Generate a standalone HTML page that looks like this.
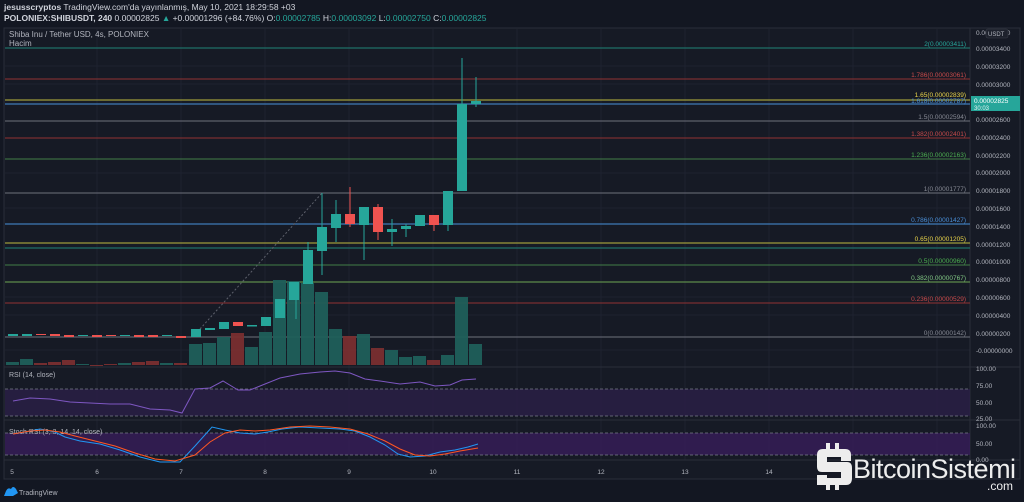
<!DOCTYPE html>
<html><head><meta charset="utf-8"><style>
body{margin:0;background:#131722;width:1024px;height:502px;overflow:hidden;font-family:"Liberation Sans",sans-serif;}
svg{position:absolute;left:0;top:0}
</style></head><body>
<svg width="1024" height="502" viewBox="0 0 1024 502" font-family="Liberation Sans, sans-serif">
<rect width="1024" height="502" fill="#131722"/>
<text x="4" y="10" font-size="8.5" fill="#d1d4dc"><tspan font-weight="bold">jesusscryptos</tspan> TradingView.com'da yayınlanmış, May 10, 2021 18:29:58 +03</text>
<text x="4" y="21" font-size="8.5" fill="#d1d4dc"><tspan font-weight="bold">POLONIEX:SHIBUSDT, 240</tspan> 0.00002825 <tspan fill="#26a69a">▲</tspan> +0.00001296 (+84.76%) O:<tspan fill="#26a69a">0.00002785</tspan> H:<tspan fill="#26a69a">0.00003092</tspan> L:<tspan fill="#26a69a">0.00002750</tspan> C:<tspan fill="#26a69a">0.00002825</tspan></text>
<rect x="4" y="28" width="1016" height="451" fill="#161a25" stroke="#2a2e39" stroke-width="1"/>
<g stroke="#1e2230" stroke-width="1">
<line x1="97" y1="29" x2="97" y2="460"/><line x1="181" y1="29" x2="181" y2="460"/><line x1="265" y1="29" x2="265" y2="460"/><line x1="349" y1="29" x2="349" y2="460"/><line x1="433" y1="29" x2="433" y2="460"/><line x1="517" y1="29" x2="517" y2="460"/><line x1="601" y1="29" x2="601" y2="460"/><line x1="685" y1="29" x2="685" y2="460"/><line x1="769" y1="29" x2="769" y2="460"/><line x1="853" y1="29" x2="853" y2="460"/><line x1="937" y1="29" x2="937" y2="460"/>
<line x1="5" y1="66" x2="970" y2="66"/><line x1="5" y1="84" x2="970" y2="84"/><line x1="5" y1="173" x2="970" y2="173"/><line x1="5" y1="208" x2="970" y2="208"/><line x1="5" y1="297" x2="970" y2="297"/><line x1="5" y1="315" x2="970" y2="315"/><line x1="5" y1="350" x2="970" y2="350"/>
</g>
<line x1="970" y1="28" x2="970" y2="460" stroke="#2a2e39"/>
<line x1="4" y1="367" x2="1020" y2="367" stroke="#2a2e39"/>
<line x1="4" y1="420" x2="1020" y2="420" stroke="#2a2e39"/>
<line x1="4" y1="460" x2="1020" y2="460" stroke="#2a2e39"/>
<text x="9" y="37" font-size="8" fill="#b2b5be">Shiba Inu / Tether USD, 4s, POLONIEX</text>
<text x="9" y="46" font-size="8" fill="#b2b5be">Hacim</text>
<!-- fib lines -->
<g stroke-width="1.2">
<line x1="5" y1="48" x2="970" y2="48" stroke="#1f6f68"/>
<line x1="5" y1="79" x2="970" y2="79" stroke="#7a2f30"/>
<line x1="5" y1="100" x2="970" y2="100" stroke="#9c9a3a"/>
<line x1="5" y1="104" x2="970" y2="104" stroke="#3f7ab8"/>
<line x1="5" y1="121" x2="970" y2="121" stroke="#5d606b"/>
<line x1="5" y1="138" x2="970" y2="138" stroke="#7a2f30"/>
<line x1="5" y1="159" x2="970" y2="159" stroke="#3a6b42"/>
<line x1="5" y1="193" x2="970" y2="193" stroke="#5d606b"/>
<line x1="5" y1="224" x2="970" y2="224" stroke="#3f7ab8"/>
<line x1="5" y1="243" x2="970" y2="243" stroke="#9c9a3a"/>
<line x1="5" y1="248" x2="970" y2="248" stroke="#1f6f68"/>
<line x1="5" y1="265" x2="970" y2="265" stroke="#3a6b42"/>
<line x1="5" y1="282" x2="970" y2="282" stroke="#5c8a4a"/>
<line x1="5" y1="303" x2="970" y2="303" stroke="#7a2f30"/>
<line x1="5" y1="337" x2="970" y2="337" stroke="#5d606b"/>
</g>
<g font-size="6.5" text-anchor="end">
<text x="966" y="46" fill="#26a69a">2(0.00003411)</text>
<text x="966" y="77" fill="#c94a4a">1.786(0.00003061)</text>
<text x="966" y="97" fill="#e8d34a">1.65(0.00002839)</text>
<text x="966" y="103" fill="#4a8fd8">1.618(0.00002787)</text>
<text x="966" y="119" fill="#868993">1.5(0.00002594)</text>
<text x="966" y="136" fill="#c94a4a">1.382(0.00002401)</text>
<text x="966" y="157" fill="#4caf50">1.236(0.00002163)</text>
<text x="966" y="191" fill="#868993">1(0.00001777)</text>
<text x="966" y="222" fill="#4a8fd8">0.786(0.00001427)</text>
<text x="966" y="241" fill="#e8d34a">0.65(0.00001205)</text>
<text x="966" y="263" fill="#4caf50">0.5(0.00000960)</text>
<text x="966" y="280" fill="#81c784">0.382(0.00000767)</text>
<text x="966" y="301" fill="#c94a4a">0.236(0.00000529)</text>
<text x="966" y="335" fill="#868993">0(0.00000142)</text>
</g>
<line x1="200" y1="329" x2="322" y2="193" stroke="#5d606b" stroke-dasharray="2,2"/>
<!-- early volume -->
<g opacity="0.95">
<rect x="6" y="362" width="13" height="3" fill="#1f5f5a"/><rect x="20" y="359" width="13" height="6" fill="#1f5f5a"/><rect x="34" y="363" width="13" height="2" fill="#7a2f30"/><rect x="48" y="362" width="13" height="3" fill="#7a2f30"/><rect x="62" y="360" width="13" height="5" fill="#7a2f30"/><rect x="76" y="364" width="13" height="1" fill="#1f5f5a"/><rect x="90" y="365" width="13" height="1" fill="#7a2f30"/><rect x="104" y="364" width="13" height="1" fill="#7a2f30"/><rect x="118" y="363" width="13" height="2" fill="#1f5f5a"/><rect x="132" y="362" width="13" height="3" fill="#7a2f30"/><rect x="146" y="361" width="13" height="4" fill="#7a2f30"/><rect x="160" y="363" width="13" height="2" fill="#1f5f5a"/><rect x="174" y="363" width="13" height="2" fill="#7a2f30"/>
<rect x="189" y="344" width="13" height="21" fill="#1f5f5a"/><rect x="203" y="343" width="13" height="22" fill="#1f5f5a"/><rect x="217" y="337" width="13" height="28" fill="#1f5f5a"/><rect x="231" y="333" width="13" height="32" fill="#7a2f30"/><rect x="245" y="347" width="13" height="18" fill="#1f5f5a"/><rect x="259" y="332" width="13" height="33" fill="#1f5f5a"/><rect x="273" y="280" width="13" height="85" fill="#1f5f5a"/><rect x="287" y="281" width="13" height="84" fill="#1f5f5a"/><rect x="301" y="283" width="13" height="82" fill="#1f5f5a"/><rect x="315" y="292" width="13" height="73" fill="#1f5f5a"/><rect x="329" y="329" width="13" height="36" fill="#1f5f5a"/><rect x="343" y="336" width="13" height="29" fill="#7a2f30"/><rect x="357" y="334" width="13" height="31" fill="#1f5f5a"/><rect x="371" y="348" width="13" height="17" fill="#7a2f30"/><rect x="385" y="350" width="13" height="15" fill="#1f5f5a"/><rect x="399" y="357" width="13" height="8" fill="#1f5f5a"/><rect x="413" y="356" width="13" height="9" fill="#1f5f5a"/><rect x="427" y="360" width="13" height="5" fill="#7a2f30"/><rect x="441" y="355" width="13" height="10" fill="#1f5f5a"/><rect x="455" y="297" width="13" height="68" fill="#1f5f5a"/><rect x="469" y="344" width="13" height="21" fill="#1f5f5a"/>
</g>
<!-- candles -->
<g>
<rect x="8" y="334" width="10" height="2" fill="#26a69a"/><rect x="22" y="334" width="10" height="2" fill="#26a69a"/><rect x="36" y="334" width="10" height="1" fill="#ef5350"/><rect x="50" y="334" width="10" height="2" fill="#ef5350"/><rect x="64" y="335" width="10" height="2" fill="#ef5350"/><rect x="78" y="335" width="10" height="1" fill="#26a69a"/><rect x="92" y="335" width="10" height="2" fill="#ef5350"/><rect x="106" y="335" width="10" height="1" fill="#ef5350"/><rect x="120" y="335" width="10" height="1" fill="#26a69a"/><rect x="134" y="335" width="10" height="2" fill="#ef5350"/><rect x="148" y="335" width="10" height="2" fill="#ef5350"/><rect x="162" y="335" width="10" height="1" fill="#26a69a"/><rect x="176" y="336" width="10" height="2" fill="#ef5350"/>
<g stroke="#26a69a" stroke-width="1"><line x1="296" y1="288" x2="296" y2="319"/><line x1="308" y1="242" x2="308" y2="284"/><line x1="322" y1="193" x2="322" y2="275"/><line x1="336" y1="200" x2="336" y2="242"/><line x1="364" y1="207" x2="364" y2="260"/><line x1="392" y1="219" x2="392" y2="246"/><line x1="406" y1="224" x2="406" y2="237"/><line x1="448" y1="191" x2="448" y2="231"/><line x1="462" y1="58" x2="462" y2="104"/><line x1="476" y1="77" x2="476" y2="107"/></g>
<g stroke="#ef5350"><line x1="350" y1="187" x2="350" y2="227"/><line x1="378" y1="204" x2="378" y2="240"/><line x1="434" y1="215" x2="434" y2="231"/></g>
<rect x="191" y="329" width="10" height="8" fill="#26a69a"/><rect x="205" y="328" width="10" height="2" fill="#26a69a"/><rect x="219" y="322" width="10" height="7" fill="#26a69a"/><rect x="233" y="322" width="10" height="4" fill="#ef5350"/><rect x="247" y="325" width="10" height="1.5" fill="#26a69a"/><rect x="261" y="317" width="10" height="9" fill="#26a69a"/><rect x="275" y="299" width="10" height="19" fill="#26a69a"/><rect x="289" y="282" width="10" height="18" fill="#26a69a"/><rect x="303" y="250" width="10" height="34" fill="#26a69a"/><rect x="317" y="227" width="10" height="24" fill="#26a69a"/><rect x="331" y="214" width="10" height="14" fill="#26a69a"/><rect x="345" y="214" width="10" height="10" fill="#ef5350"/><rect x="359" y="207" width="10" height="18" fill="#26a69a"/><rect x="373" y="207" width="10" height="25" fill="#ef5350"/><rect x="387" y="229" width="10" height="3" fill="#26a69a"/><rect x="401" y="226" width="10" height="3" fill="#26a69a"/><rect x="415" y="215" width="10" height="11" fill="#26a69a"/><rect x="429" y="215" width="10" height="10" fill="#ef5350"/><rect x="443" y="191" width="10" height="34" fill="#26a69a"/><rect x="457" y="104" width="10" height="87" fill="#26a69a"/><rect x="471" y="101" width="10" height="3" fill="#26a69a"/>
</g>
<!-- price axis -->
<g font-size="6.5" fill="#b2b5be">
<text x="976" y="35">0.00003400</text><text x="976" y="51">0.00003400</text><text x="976" y="69">0.00003200</text><text x="976" y="87">0.00003000</text><text x="976" y="122">0.00002600</text><text x="976" y="140">0.00002400</text><text x="976" y="158">0.00002200</text><text x="976" y="175">0.00002000</text><text x="976" y="193">0.00001800</text><text x="976" y="211">0.00001600</text><text x="976" y="229">0.00001400</text><text x="976" y="247">0.00001200</text><text x="976" y="264">0.00001000</text><text x="976" y="282">0.00000800</text><text x="976" y="300">0.00000600</text><text x="976" y="318">0.00000400</text><text x="976" y="336">0.00000200</text><text x="976" y="353">-0.00000000</text>
</g>
<rect x="986" y="29" width="22" height="9" rx="2" fill="#1e222d" stroke="#3a3e49" stroke-width="0.6"/><text x="988" y="36" font-size="6" fill="#b2b5be">USDT</text>
<rect x="971" y="96" width="49" height="15" fill="#26a69a"/>
<text x="974" y="103" font-size="6.5" fill="#fff">0.00002825</text><text x="974" y="110" font-size="6" fill="#e0f2f1">30:03</text>
<!-- RSI -->
<text x="9" y="377" font-size="7" fill="#b2b5be">RSI (14, close)</text>
<rect x="5" y="389" width="965" height="27" fill="#2a1f47" opacity="0.8"/>
<line x1="5" y1="389" x2="970" y2="389" stroke="#787b86" stroke-dasharray="3,2" stroke-width="0.8"/>
<line x1="5" y1="416" x2="970" y2="416" stroke="#787b86" stroke-dasharray="3,2" stroke-width="0.8"/>
<polyline fill="none" stroke="#7e57c2" stroke-width="1" points="13,401 30,398 50,399 70,402 90,403 110,404 130,404 150,409 170,410 182,413 195,389 210,388 223,381 238,390 250,390 265,384 280,378 300,374 320,372 335,371 350,373 365,379 380,381 400,384 420,382 435,386 450,385 462,380 476,379"/>
<g font-size="6.5" fill="#b2b5be"><text x="976" y="371">100.00</text><text x="976" y="388">75.00</text><text x="976" y="405">50.00</text><text x="976" y="421">25.00</text><text x="976" y="428">100.00</text><text x="976" y="446">50.00</text><text x="976" y="462">0.00</text></g>
<!-- Stoch -->
<rect x="5" y="433" width="965" height="22" fill="#3a1e5e" opacity="0.75"/>
<line x1="5" y1="433" x2="970" y2="433" stroke="#787b86" stroke-dasharray="3,2" stroke-width="0.8"/>
<line x1="5" y1="455" x2="970" y2="455" stroke="#787b86" stroke-dasharray="3,2" stroke-width="0.8"/>
<text x="9" y="434" font-size="7" fill="#b2b5be">Stoch RSI (3, 3, 14, 14, close)</text>
<polyline fill="none" stroke="#2196f3" stroke-width="1" points="13,434 25,432 40,429 55,432 65,437 80,441 100,444 120,450 140,457 160,462 180,462 195,446 212,427 225,430 240,433 255,434 268,432 282,429 300,427 320,428 340,429 355,431 370,437 385,445 398,454 410,457 425,456 440,452 455,450 468,447 478,444"/>
<polyline fill="none" stroke="#ff5722" stroke-width="1" points="13,434 30,431 45,430 60,432 75,436 95,441 115,446 135,453 155,459 175,461 195,455 210,442 225,433 240,430 255,431 270,430 290,427 310,426 330,427 350,429 368,434 385,441 400,449 415,455 430,456 445,454 460,451 478,448"/>
<!-- time axis -->
<g font-size="6.5" fill="#b2b5be" text-anchor="middle"><text x="12" y="474">5</text><text x="97" y="474">6</text><text x="181" y="474">7</text><text x="265" y="474">8</text><text x="349" y="474">9</text><text x="433" y="474">10</text><text x="517" y="474">11</text><text x="601" y="474">12</text><text x="685" y="474">13</text><text x="769" y="474">14</text></g>
<!-- TradingView -->
<path d="M4,496 L6,491 Q8,487 11,489 Q13,485 16,489 L18,493 L13,496 Z" fill="#2196f3"/>
<text x="19" y="495" font-size="7" fill="#b2b5be">TradingView</text>
<!-- BitcoinSistemi logo -->
<g fill="#ededed">
<rect x="826" y="443" width="4" height="6"/><rect x="835" y="443" width="4" height="6"/><rect x="826" y="484" width="4" height="6"/><rect x="835" y="484" width="4" height="6"/>
<path d="M817,449 H845 Q851,449 851,455 V461 H841 V457 H827 V462 H847 Q852,462 852,468 V478 Q852,485 846,485 H817 V475 H827 V478 H841 V472 H822 Q817,472 817,467 V455 Q817,449 823,449 Z"/>
</g>
<text x="853" y="478" font-size="27" fill="#ededed" letter-spacing="-0.5">BitcoinSistemi</text>
<text x="1013" y="490" font-size="12" fill="#ededed" text-anchor="end">.com</text>
</svg>
</body></html>
